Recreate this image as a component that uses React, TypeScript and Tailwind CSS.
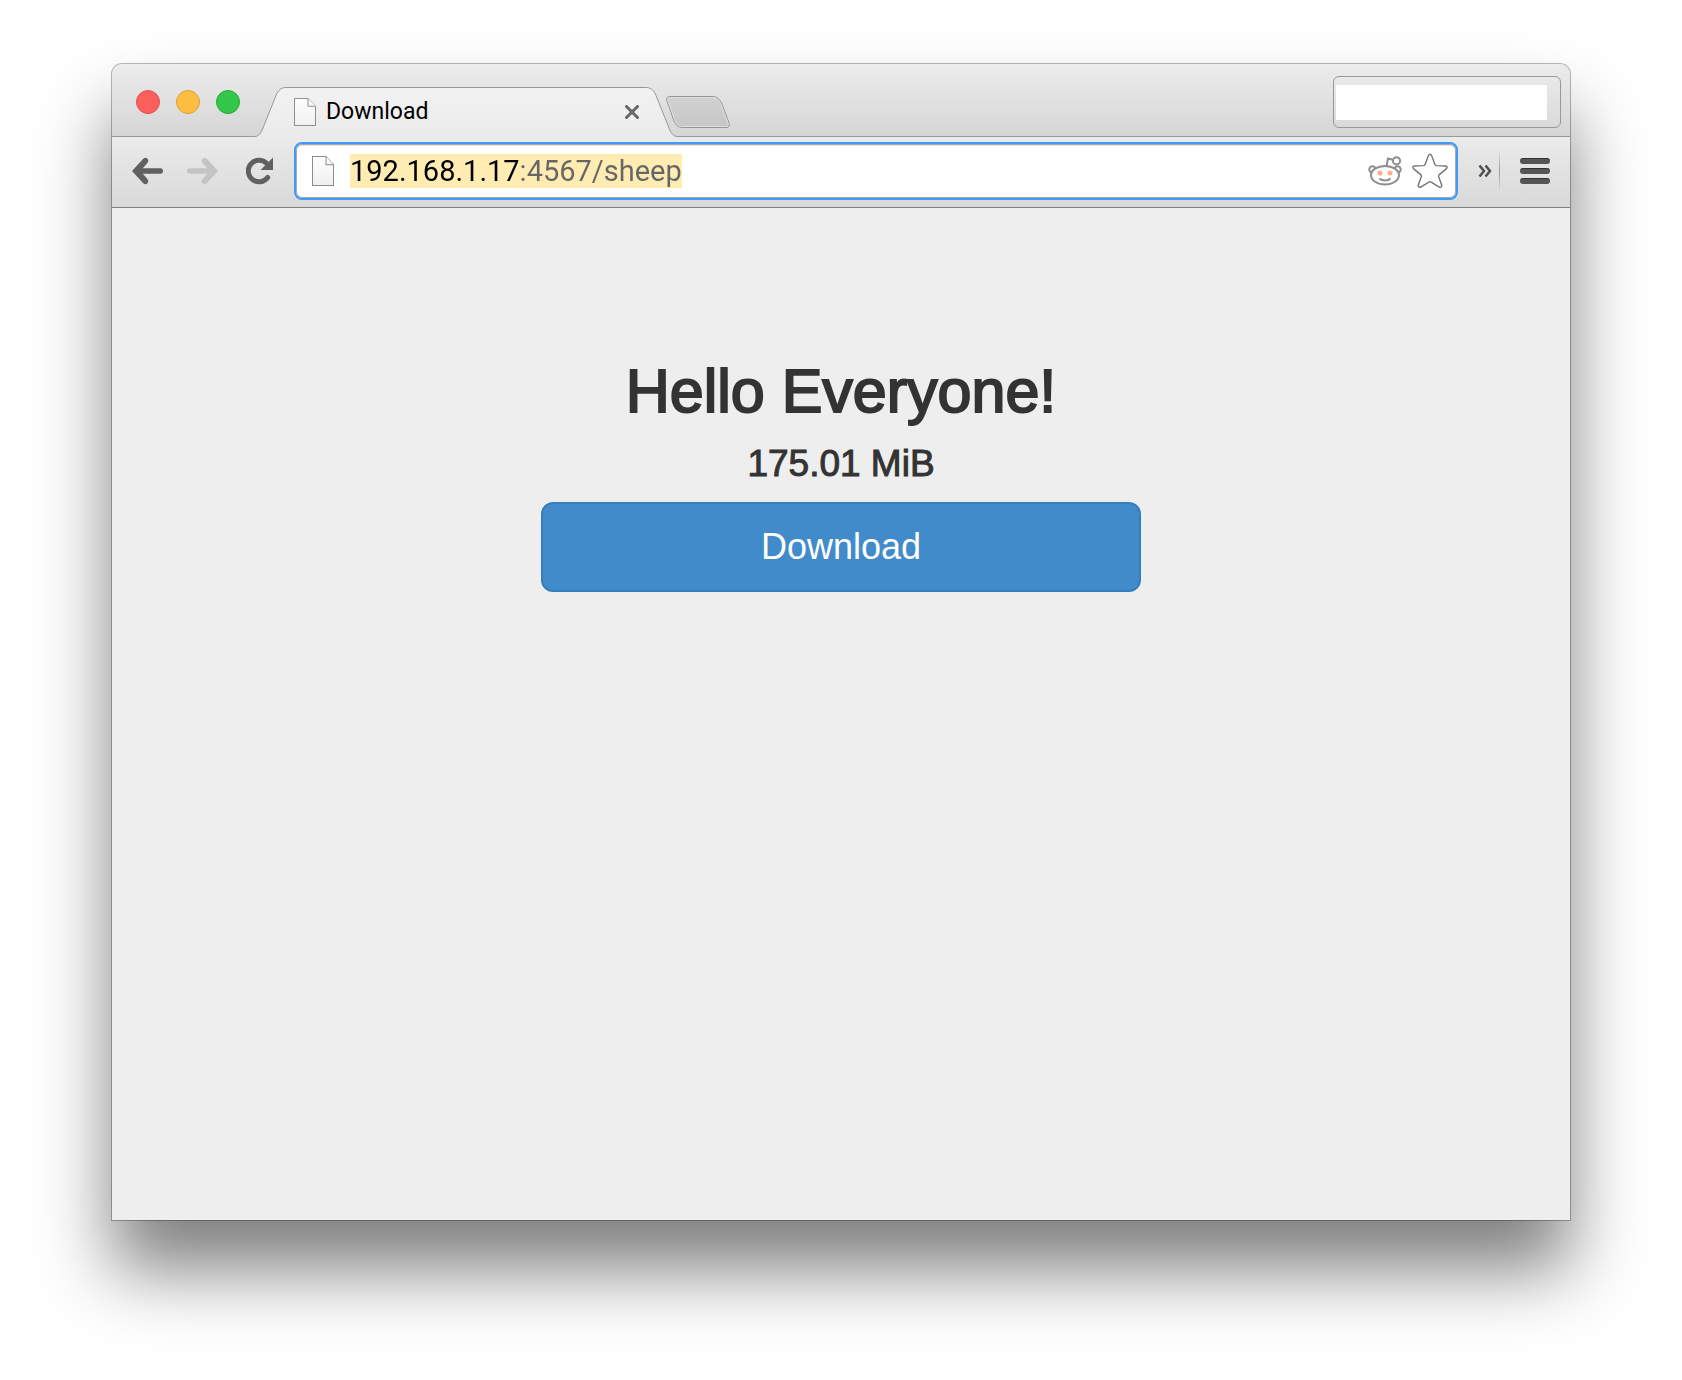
import React from "react";

function DocumentIcon({ className }: { className: string }) {
  return (
    <svg viewBox="0 0 22 29" className={className} preserveAspectRatio="none" aria-hidden="true">
      <defs>
        <linearGradient id="paper" x1="0" y1="0" x2="0" y2="1">
          <stop offset="0" stopColor="#ffffff" />
          <stop offset="1" stopColor="#f0f0f0" />
        </linearGradient>
      </defs>
      <path d="M.5.5H14L21.500 8.500V28.500H.5Z" fill="url(#paper)" stroke="#8c8c8c" />
      <path d="M14 .5V8.500H21.500" fill="#fafafa" stroke="#8c8c8c" />
    </svg>
  );
}

function Tab() {
  return (
    <div role="tab" aria-selected="true" className="relative -mb-px ml-3.5 flex h-[50px] w-[424px]">
      <svg viewBox="0 0 32 50" className="h-[50px] w-8 shrink-0" aria-hidden="true">
        <path d="M0 50C4 49.500 6 47.500 8 43.500L22 8.500C24 3.500 27 .5 32 .5V50Z" fill="url(#tabFill)" />
        <path d="M0 49.500C4 49.500 6 47.500 8 43.500L22 8.500C24 3.500 27 .5 32 .5" fill="none" stroke="#999" />
        <defs>
          <linearGradient id="tabFill" x1="0" y1="0" x2="0" y2="1">
            <stop offset="0" stopColor="#f2f2f2" />
            <stop offset="1" stopColor="#ebebeb" />
          </linearGradient>
        </defs>
      </svg>
      <div className="flex flex-1 items-center border-t border-[#999] bg-linear-to-b from-[#f2f2f2] to-[#ebebeb] pb-0.5 pl-2">
        <DocumentIcon className="h-7 w-[22px]" />
        <span className="ml-2.5 flex-1 font-['Roboto',sans-serif] text-[23px] leading-7 text-black">Download</span>
        <button type="button" aria-label="Close tab" className="mr-[7px]">
          <svg viewBox="0 0 14 14" className="size-3.5" aria-hidden="true">
            <path d="M1.500 1.500L12.500 12.500M12.500 1.500L1.500 12.500" stroke="#666" strokeWidth="3" strokeLinecap="round" />
          </svg>
        </button>
      </div>
      <svg viewBox="0 0 32 50" className="h-[50px] w-8 shrink-0" aria-hidden="true">
        <path d="M32 50C28 49.500 26 47.500 24 43.500L10 8.500C8 3.500 5 .5 0 .5V50Z" fill="url(#tabFill)" />
        <path d="M32 49.500C28 49.500 26 47.500 24 43.500L10 8.500C8 3.500 5 .5 0 .5" fill="none" stroke="#999" />
      </svg>
    </div>
  );
}

function TabStrip() {
  return (
    <header className="flex h-[73px] items-end rounded-t-[10px] border-b border-[#999] bg-linear-to-b from-[#ececec] to-[#d6d6d6] pr-[9px]">
      <div className="flex gap-4 self-center pl-6 pt-1">
        <button type="button" aria-label="Close window" className="size-6 rounded-full border border-[#e2504b] bg-[#fc605c]" />
        <button type="button" aria-label="Minimize window" className="size-6 rounded-full border border-[#dfa035] bg-[#fdbd41]" />
        <button type="button" aria-label="Zoom window" className="size-6 rounded-full border border-[#27aa35] bg-[#34c84a]" />
      </div>
      <Tab />
      <button type="button" aria-label="New tab" className="-ml-3 mb-2">
        <svg viewBox="0 0 64 32" className="h-8 w-16" aria-hidden="true">
          <defs>
            <linearGradient id="newTab" x1="0" y1="0" x2="0" y2="1">
              <stop offset="0" stopColor="#d2d2d2" />
              <stop offset="1" stopColor="#c6c6c6" />
            </linearGradient>
          </defs>
          <path
            d="M4 .5H46C51 .5 53.500 3 55.500 7L63 27C64 30 63 31.500 60 31.500H17C12 31.500 10 29 8 25L1 5C0 2 1 .5 4 .5Z"
            fill="url(#newTab)"
            stroke="#959595"
          />
          <path
            d="M4.500 1.500H46C50.500 1.500 52.500 3.500 54.500 7.500L62 27C62.800 29.500 62 30.500 60 30.500H17C12.500 30.500 11 28.500 9 24.500L2 5C1.200 2.500 2.500 1.500 4.500 1.500Z"
            fill="none"
            stroke="#dedede"
          />
        </svg>
      </button>
      <button
        type="button"
        aria-label="Profile"
        className="mb-2 ml-auto flex h-[52px] w-[228px] items-center rounded-md border border-[#999] bg-linear-to-b from-[#e9e9e9] to-[#dadada] pl-0.5"
      >
        <span className="h-[35px] w-[211px] bg-white" />
      </button>
    </header>
  );
}

function ArrowIcon({ flip, color }: { flip?: boolean; color: string }) {
  return (
    <svg viewBox="0 0 31 28" className={flip ? "h-7 w-[31px] -scale-x-100" : "h-7 w-[31px]"} aria-hidden="true">
      <path d="M0 14L11 2Q13.500 -.5 15.500 1.700Q17.200 4 15.200 6.200L10.800 11.200H28.300Q31 11.400 31 14Q31 16.600 28.300 16.800H10.800L15.200 21.800Q17.200 24 15.500 26.300Q13.500 28.500 11 26Z" fill={color} />
    </svg>
  );
}

function Toolbar() {
  return (
    <nav className="flex h-[71px] items-center border-b border-[#808080] bg-linear-to-b from-[#ebebeb] to-[#d9d9d9] pb-0.5 pl-5 pr-5">
      <button type="button" aria-label="Back">
        <ArrowIcon color="#606060" />
      </button>
      <button type="button" aria-label="Forward" className="ml-6">
        <ArrowIcon flip color="#c4c4c4" />
      </button>
      <button type="button" aria-label="Reload" className="ml-7">
        <svg viewBox="0 0 28 28" className="size-7" aria-hidden="true">
          <path d="M21.700 20.500A10.800 10.800 0 1 1 20.500 6.200" fill="none" stroke="#606060" strokeWidth="5" strokeLinecap="round" />
          <path d="M27 .5V13H14.500Z" fill="#606060" />
        </svg>
      </button>
      <label className="ml-5 flex h-[58px] flex-1 items-center rounded-lg border-2 border-[#3f9bfb] bg-white pl-4 pr-2 shadow-[inset_0_0_0_1px_#a8a8a8,inset_0_2px_1px_#e4e4e4]">
        <DocumentIcon className="h-[30px] w-[22px] shrink-0" />
        <input
          type="text"
          aria-label="Address"
          defaultValue="192.168.1.17:4567/sheep"
          className="ml-4 h-[34px] [field-sizing:content] bg-[linear-gradient(to_right,#000_170px,#666_170px),linear-gradient(#ffecb3,#ffecb3)] [background-clip:text,border-box] font-['Roboto',sans-serif] text-[29px] leading-[34px] text-transparent caret-black outline-none"
        />
        <button type="button" aria-label="Reddit" className="ml-auto">
          <svg viewBox="0 0 34 30" className="h-[30px] w-[34px]" fill="none" stroke="#8e8e8e" strokeWidth="2" aria-hidden="true">
            <circle cx="4.500" cy="13.500" r="3.200" />
            <circle cx="29.500" cy="13.500" r="3.200" />
            <circle cx="28.500" cy="4.800" r="3.600" />
            <path d="M18.500 10L20 2.500L24.800 3.800" />
            <ellipse cx="17" cy="19.200" rx="14" ry="9.300" fill="#fff" />
            <circle cx="12" cy="17" r="2.500" fill="#ffab8c" stroke="none" />
            <circle cx="22" cy="17" r="2.500" fill="#ffab8c" stroke="none" />
            <path d="M11.500 22.500C14 25.200 20 25.200 22.500 22.500" />
          </svg>
        </button>
        <button type="button" aria-label="Bookmark this page" className="ml-2.5">
          <svg viewBox="0 0 36 36" className="size-9" aria-hidden="true">
            <path
              d="M16.300 2.800Q18 -.2 19.700 2.800L22.800 11.200Q23.300 12.500 24.700 12.600L33.500 13Q36.300 13.600 34.300 15.900L27.300 21.600Q26.300 22.500 26.700 23.800L29.700 31.900Q30.100 34.900 27.200 34L19.200 29.100Q18 28.300 16.800 29.100L8.800 34Q5.900 34.900 6.300 31.900L9.300 23.800Q9.700 22.500 8.700 21.600L1.700 15.900Q-.3 13.600 2.500 13L11.300 12.600Q12.700 12.500 13.200 11.200Z"
              fill="#fff"
              stroke="#757575"
              strokeWidth="1.400"
            />
          </svg>
        </button>
      </label>
      <button type="button" aria-label="More extensions" className="ml-5">
        <svg viewBox="0 0 14 14" className="size-3.5" aria-hidden="true">
          <path d="M1.500 1.500L6 7L1.500 12.500M7.500 1.500L12 7L7.500 12.500" fill="none" stroke="#505050" strokeWidth="2.500" />
        </svg>
      </button>
      <div className="ml-[7px] h-10 w-px bg-linear-to-b from-[#e4e4e4] via-[#999] to-[#dcdcdc]" />
      <button type="button" aria-label="Menu" className="ml-5 flex flex-col gap-1">
        <span className="h-1.5 w-[30px] rounded-full border-t border-[#333] bg-[#555]" />
        <span className="h-1.5 w-[30px] rounded-full border-t border-[#333] bg-[#555]" />
        <span className="h-1.5 w-[30px] rounded-full border-t border-[#333] bg-[#555]" />
      </button>
    </nav>
  );
}

export default function App() {
  return (
    <div className="flex min-h-screen flex-col bg-white px-28 pb-40 pt-16">
      <div className="flex flex-1 flex-col rounded-t-[10px] bg-[#eee] shadow-[0_0_0_1px_rgba(0,0,0,0.28),0_50px_72px_rgba(0,0,0,0.5)]">
        <TabStrip />
        <Toolbar />
        <main className="flex flex-1 flex-col items-center px-4 pt-[150px] font-['Liberation_Sans',Arial,sans-serif] text-[#333]">
          <h1 className="text-[61px] leading-[66px] [-webkit-text-stroke:2px_#333]">Hello Everyone!</h1>
          <h2 className="mt-5 text-[37px] leading-10 [-webkit-text-stroke:1px_#333]">175.01 MiB</h2>
          <button
            type="button"
            className="mt-[18px] h-[90px] w-full max-w-[600px] rounded-xl border-2 border-[#357ebd] bg-[#428bca] text-[36px] text-white"
          >
            Download
          </button>
        </main>
      </div>
    </div>
  );
}
